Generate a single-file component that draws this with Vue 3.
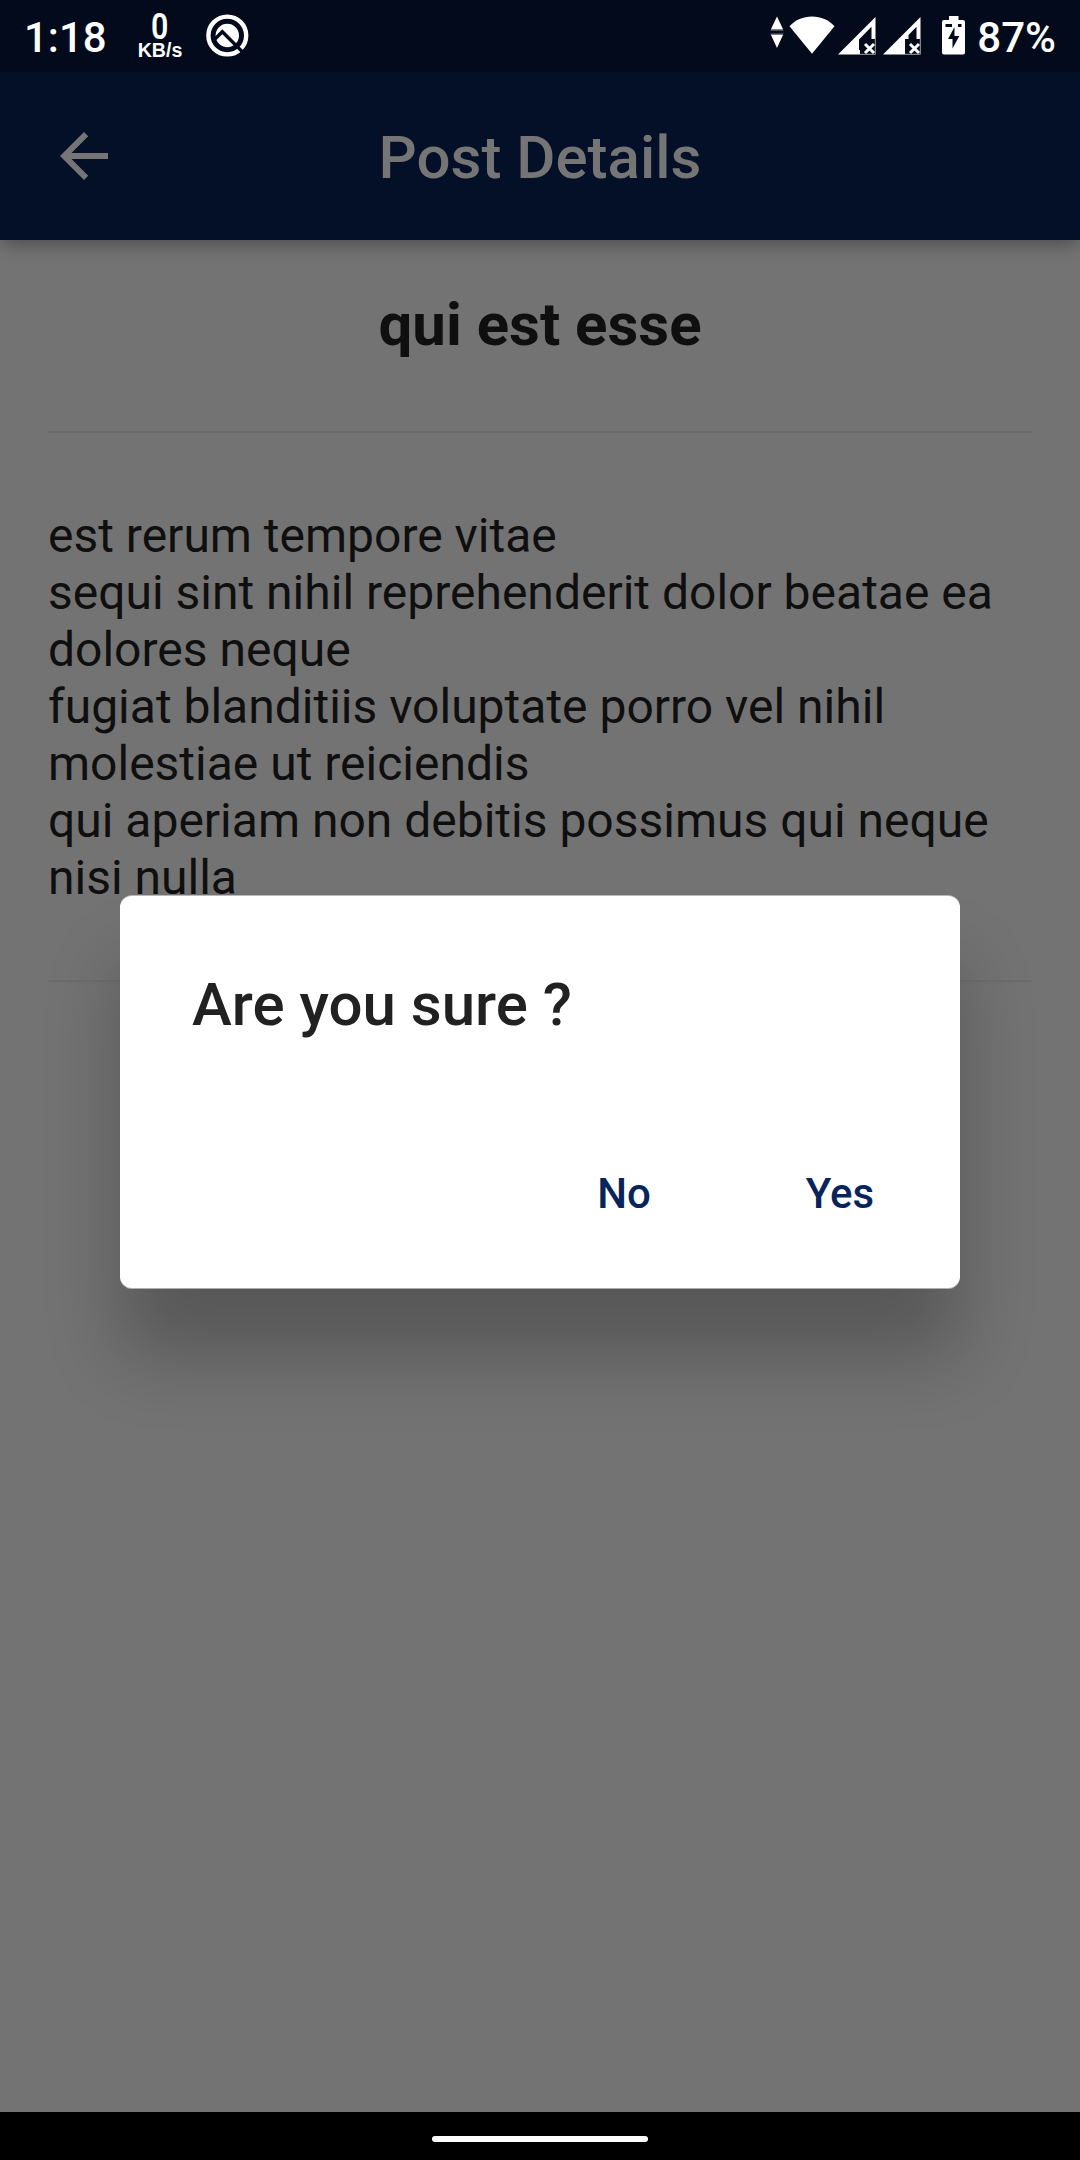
<script setup>
const body = `est rerum tempore vitae
sequi sint nihil reprehenderit dolor beatae ea dolores neque
fugiat blanditiis voluptate porro vel nihil molestiae ut reiciendis
qui aperiam non debitis possimus qui neque nisi nulla`
</script>

<template>
  <div class="screen">
    <header class="status">
      <span class="clock">1:18</span>
      <div class="speed">
        <span class="rate">0</span>
        <span class="unit">KB/s</span>
      </div>
      <svg class="q" width="44" height="44" viewBox="0 0 44 44">
        <circle cx="22.3" cy="21.5" r="18.900" fill="none" stroke="#fff" stroke-width="4.4" />
        <circle cx="22.3" cy="21.5" r="11.700" fill="#fff" />
        <path d="M9 26L17.300 17.700L38 38.400" fill="none" stroke="#020a1c" stroke-width="3.400" />
      </svg>
      <div class="icons">
        <svg class="updown" width="14" height="32" viewBox="0 0 14 32">
          <path d="M7 .5L13.200 13.500H.8zM.8 18.500H13.200L7 32z" fill="#fff" />
          <path d="M.5 14.500H13.500M.5 17.800H13.500" stroke="#5b616d" stroke-width=".8" />
        </svg>
        <svg class="wifi" width="46" height="38" viewBox="0 0 46 38">
          <path d="M23 37.800L.5 10.200C6.500 4 14 .6 23 .6S39.500 4 45.500 10.200z" fill="#fff" />
        </svg>
        <svg class="signal" width="38" height="39" viewBox="0 0 38 39">
          <path d="M0 38.500L37.500 1V38.500z" fill="#fff" />
          <path d="M21 23.500L33.500 10.800V23H37V38H22V34H21z" fill="#020a1c" />
          <path d="M37.200 22V38.200H22" fill="none" stroke="#7d828c" stroke-width=".8" />
          <path d="M27 28L36 37M36 28L27 37" stroke="#fff" stroke-width="3" />
        </svg>
        <svg class="signal" width="38" height="39" viewBox="0 0 38 39">
          <path d="M0 38.500L37.500 1V38.500z" fill="#fff" />
          <path d="M25.500 19L33.500 10.800V23H37V38H22V23H25.500z" fill="#020a1c" />
          <path d="M37.200 22V38.200H22" fill="none" stroke="#7d828c" stroke-width=".8" />
          <path d="M27 28L36 37M36 28L27 37" stroke="#fff" stroke-width="3" />
        </svg>
        <svg class="battery" width="23" height="39" viewBox="0 0 23 39">
          <path d="M7 0H16.500V4H21Q23 4 23 6V36.500Q23 38.500 21 38.500H2Q0 38.500 0 36.500V6Q0 4 2 4H7z" fill="#fff" />
          <path d="M3.500 8H10V11H3.500zM16 8H19.500V11H16zM12.500 11V20H17.300L10.500 32.500V23H6z" fill="#020a1c" />
        </svg>
        <span class="percent">87%</span>
      </div>
    </header>

    <nav class="appbar">
      <svg class="back" width="72" height="72" viewBox="0 0 24 24">
        <path d="M20 11H7.830l5.590-5.590L12 4l-8 8 8 8 1.410-1.410L7.830 13H20v-2z" fill="#757575" />
      </svg>
      <span class="bar-title">Post Details</span>
    </nav>

    <main class="content">
      <h1 class="title">qui est esse</h1>
      <div class="divider"></div>
      <p class="text">{{ body }}</p>
      <div class="divider"></div>
    </main>

    <footer class="navbar"><div class="pill"></div></footer>

    <div class="overlay">
      <section class="dialog">
        <h2 class="question">Are you sure ?</h2>
        <div class="actions">
          <button class="btn no">No</button>
          <button class="btn yes">Yes</button>
        </div>
      </section>
    </div>
  </div>
</template>

<style>
body {
  margin: 0;
  background: #737373;
}
</style>

<style scoped>
.screen {
  position: relative;
  display: flex;
  flex-direction: column;
  width: 1080px;
  height: 2160px;
  overflow: hidden;
  background: #737373;
  font-family: Roboto, "Liberation Sans", sans-serif;
}
.screen * {
  box-sizing: border-box;
}
svg {
  display: block;
  flex: none;
}
.status {
  display: flex;
  height: 72px;
  flex: none;
  padding-left: 24px;
  padding-right: 24px;
  background: #020a1c;
  color: #fff;
  position: relative;
  z-index: 2;
}
.clock {
  width: 113px;
  padding-top: 13px;
  font-size: 42px;
  font-weight: 500;
  line-height: 50px;
}
.speed {
  display: flex;
  flex-direction: column;
  align-items: center;
  width: 46px;
  padding-top: 11px;
}
.rate {
  height: 29px;
  font-size: 37px;
  font-weight: 600;
  line-height: 32px;
  transform: scaleX(0.82);
}
.unit {
  font: 700 19.6px/20px "Liberation Sans", sans-serif;
}
.q {
  margin: 14px 0 0 22px;
}
.icons {
  display: flex;
  margin-left: auto;
  padding-top: 16px;
}
.wifi {
  margin-left: 5px;
}
.signal {
  margin-left: 3px;
}
.signal + .signal {
  margin-left: 7px;
}
.battery {
  margin-left: 21px;
}
.percent {
  margin-left: 12px;
  margin-top: -3px;
  font-size: 42px;
  font-weight: 500;
  line-height: 50px;
}
.appbar {
  position: relative;
  z-index: 1;
  display: flex;
  align-items: center;
  height: 168px;
  flex: none;
  padding: 0 48px;
  background: #041027;
  box-shadow: 0 10px 16px -4px rgba(0, 0, 0, 0.26), 0 2px 14px rgba(0, 0, 0, 0.06);
}
.bar-title {
  flex: 1;
  margin-right: 72px;
  padding-top: 4px;
  text-align: center;
  font-size: 60px;
  font-weight: 500;
  line-height: 70px;
  color: #757575;
}
.content {
  flex: 1;
  padding: 49px 48px 0;
  color: #0f0f0f;
}
.title {
  margin: 0 0 71px;
  text-align: center;
  font-size: 60px;
  font-weight: 700;
  line-height: 71px;
}
.divider {
  height: 2px;
  background: #6c6c6c;
}
.text {
  margin: 74px 0;
  font-size: 48px;
  line-height: 57px;
  white-space: pre-line;
}
.navbar {
  display: flex;
  justify-content: center;
  height: 48px;
  flex: none;
  padding-top: 24px;
  background: #000;
}
.pill {
  width: 216px;
  height: 6px;
  border-radius: 3px;
  background: #fff;
}
.overlay {
  position: absolute;
  inset: 72px 0 48px;
  display: flex;
  align-items: center;
  justify-content: center;
}
.dialog {
  width: 840px;
  height: 392px;
  padding: 73px 24px 0 72px;
  border-radius: 12px;
  background: #fff;
  box-shadow: 0 1px 0 rgba(255, 255, 255, 0.5), 0 -1px 0 rgba(255, 255, 255, 0.5), 0 68px 75px rgba(0, 0, 0, 0.24);
}
.question {
  margin: 0;
  font-size: 60px;
  font-weight: 500;
  line-height: 71px;
  color: #212121;
}
.actions {
  display: flex;
  justify-content: flex-end;
  gap: 24px;
  margin-top: 81px;
}
.btn {
  width: 192px;
  height: 144px;
  padding: 0;
  border: 0;
  background: none;
  font: 500 42px/49px Roboto, sans-serif;
  color: #08255b;
}
</style>
